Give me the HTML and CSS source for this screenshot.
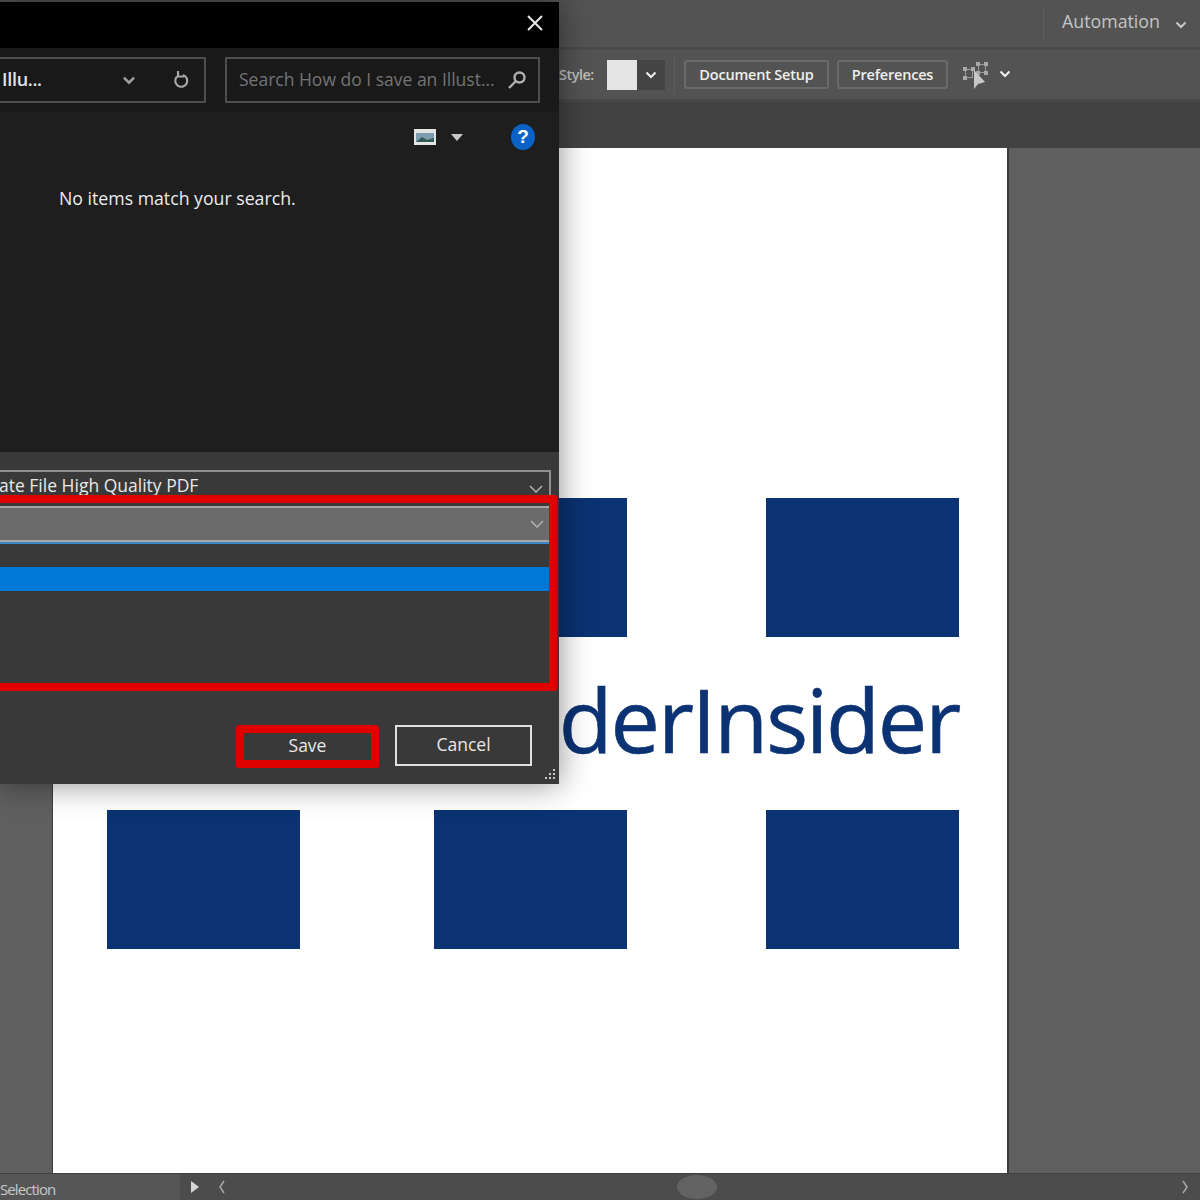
FILE: index.html
```html
<!DOCTYPE html>
<html>

<head>
    <meta charset="utf-8">
    <title>Save As</title>
    <link rel="stylesheet" href="styles.css">
</head>

<body>
    <div class="app">
        <div class="menubar">
            <div class="menubar__sep"></div>
            <span class="menubar__label">Automation</span>
            <svg class="chevron chevron--menu" viewBox="0 0 12 8"><path d="M1.500 1.500 6 6l4.500-4.500"/></svg>
        </div>

        <div class="controlbar">
            <span class="controlbar__label">Style:</span>
            <div class="swatch"></div>
            <div class="swatch__drop">
                <svg class="chevron chevron--white" viewBox="0 0 12 8"><path d="M1.500 1.500 6 6l4.500-4.500"/></svg>
            </div>
            <div class="controlbar__sep"></div>
            <div class="ctl-button ctl-button--setup">Document Setup</div>
            <div class="ctl-button ctl-button--prefs">Preferences</div>
            <svg class="arrange-icon" viewBox="0 0 26 28">
                <rect x="2.500" y="8.500" width="7" height="8"/>
                <rect x="15.500" y="3.500" width="7" height="8"/>
                <path class="arrange-icon__dot" d="M0 6h4v4H0zM0 15h4v4H0zM8 6h4v4H8zM13 1h4v4h-4zM21 1h4v4h-4zM13 10h4v4h-4zM21 10h4v4h-4z"/>
                <path class="arrange-icon__cursor" d="M11 9v19l4-5 7-2z"/>
            </svg>
            <svg class="chevron chevron--white chevron--arrange" viewBox="0 0 12 8"><path d="M1.500 1.500 6 6l4.500-4.500"/></svg>
        </div>

        <div class="tabbar"></div>

        <div class="workspace">
            <div class="artboard">
                <div class="art-row">
                    <div class="art-block"></div>
                    <div class="art-block"></div>
                    <div class="art-block"></div>
                </div>
                <div class="art-title">derInsider</div>
                <div class="art-row">
                    <div class="art-block"></div>
                    <div class="art-block"></div>
                    <div class="art-block"></div>
                </div>
            </div>
        </div>

        <div class="statusbar">
            <div class="statusbar__info"><span class="statusbar__text">Selection</span></div>
            <div class="statusbar__play"></div>
            <div class="scroller">
                <svg class="scroller__arrow" viewBox="0 0 8 14"><path d="M6 1 2 7l4 6"/></svg>
                <div class="scroller__thumb"></div>
                <svg class="scroller__arrow" viewBox="0 0 8 14"><path d="M2 1l4 6-4 6"/></svg>
            </div>
        </div>
    </div>

    <!-- Save As dialog, floats over the app window -->
    <div class="dialog">
        <div class="dialog__title">
            <svg class="dialog__close" viewBox="0 0 18 18"><path d="M2 2l14 14M16 2 2 16"/></svg>
        </div>

        <div class="dialog__nav">
            <div class="nav-box nav-box--address">
                <span class="nav-box__path">Illu...</span>
                <svg class="chevron chevron--address" viewBox="0 0 12 8"><path d="M1.500 1.500 6 6l4.500-4.500"/></svg>
                <svg class="refresh-icon" viewBox="0 0 18 20">
                    <path d="M5 6.500a6 6 0 1 0 6-1.500"/>
                    <path d="M6 1v5.500h6"/>
                </svg>
            </div>
            <div class="nav-box nav-box--search">
                <span class="nav-box__hint">Search How do I save an Illust...</span>
                <svg class="search-icon" viewBox="0 0 20 20">
                    <circle cx="12.500" cy="7.500" r="5"/>
                    <path d="M8.500 11.500 2 18"/>
                </svg>
            </div>
        </div>

        <div class="dialog__commands">
            <svg class="view-icon" viewBox="0 0 22 16">
                <rect width="22" height="16" fill="#e4e4e4"/>
                <rect x="2" y="4" width="18" height="9" fill="#7d9cb0"/>
                <path d="M2 13l6-5 5 3 7-2v4z" fill="#2f5a55"/>
            </svg>
            <div class="caret-down"></div>
            <div class="help-icon">?</div>
        </div>

        <div class="dialog__results">
            <p class="dialog__empty">No items match your search.</p>
        </div>

        <div class="dialog__form">
            <div class="field">
                <span class="field__text">ate File High Quality PDF</span>
                <svg class="chevron chevron--field" viewBox="0 0 14 8"><path d="M1 1l6 6 6-6"/></svg>
            </div>
            <div class="select-wrap">
                <div class="field field--open">
                    <svg class="chevron chevron--field" viewBox="0 0 14 8"><path d="M1 1l6 6 6-6"/></svg>
                </div>
                <div class="droplist">
                    <div class="droplist__item"></div>
                </div>
            </div>
            <div class="dialog__buttons">
                <div class="dialog-btn dialog-btn--save">Save</div>
                <div class="dialog-btn dialog-btn--cancel">Cancel</div>
            </div>
            <svg class="grip" viewBox="0 0 14 12">
                <rect x="11" y="0" width="2" height="2"/>
                <rect x="7" y="4" width="2" height="2"/>
                <rect x="11" y="4" width="2" height="2"/>
                <rect x="3" y="8" width="2" height="2"/>
                <rect x="7" y="8" width="2" height="2"/>
                <rect x="11" y="8" width="2" height="2"/>
            </svg>
        </div>
    </div>
</body>

</html>
```

FILE: styles.css
```css
* {
    box-sizing: border-box;
}

body {
    margin: 0;
    background: #535353;
    font-family: "Open Sans", "Noto Sans", sans-serif;
    overflow: hidden;
}

.app {
    display: flex;
    flex-direction: column;
    width: 1200px;
    height: 1200px;
}

.chevron {
    display: block;
    fill: none;
    stroke: #c8c8c8;
    stroke-width: 2;
}

.chevron--white {
    width: 12px;
    height: 8px;
    stroke: #f0f0f0;
}

/* app top bars */
.menubar {
    display: flex;
    align-items: center;
    height: 47px;
    background: #535353;
}

.menubar__sep {
    width: 1px;
    height: 32px;
    margin-left: 1043px;
    background: #5e5e5e;
}

.menubar__label {
    margin: 0 0 5px 18px;
    color: #c4c4c4;
    font-size: 17.800px;
}

.chevron--menu {
    width: 12px;
    height: 8px;
    margin-left: 15px;
    margin-top: 2px;
}

.controlbar {
    display: flex;
    align-items: center;
    height: 55px;
    padding-left: 559px;
    background: #535353;
    border-top: 3px solid #4a4a4a;
    border-bottom: 3px solid #484848;
}

.controlbar__label {
    width: 48px;
    color: #bdbdbd;
    font-size: 14.500px;
    font-weight: 600;
    letter-spacing: -.5px;
}

.swatch {
    width: 30px;
    height: 30px;
    background: #e4e4e4;
}

.swatch__drop {
    display: flex;
    align-items: center;
    justify-content: center;
    width: 28px;
    height: 30px;
    background: #444;
}

.controlbar__sep {
    width: 1px;
    height: 36px;
    margin: 0 9px;
    background: #5e5e5e;
}

.ctl-button {
    display: flex;
    align-items: center;
    justify-content: center;
    height: 29px;
    border: 2px solid #6a6a6a;
    border-radius: 3px;
    color: #efefef;
    font-size: 14.500px;
    font-weight: 600;
    letter-spacing: -.2px;
}

.ctl-button--setup {
    width: 145px;
}

.ctl-button--prefs {
    width: 111px;
    margin-left: 8px;
}

.arrange-icon {
    width: 26px;
    height: 28px;
    margin-left: 15px;
    fill: none;
    stroke: #9a9a9a;
    stroke-width: 1;
}

.arrange-icon__dot {
    fill: #a8a8a8;
    stroke: none;
}

.arrange-icon__cursor {
    fill: #c8c8c8;
    stroke: none;
}

.chevron--arrange {
    margin-left: 10px;
    margin-top: -2px;
}

.tabbar {
    height: 46px;
    background: #424242;
}

/* canvas */
.workspace {
    flex: 1;
    display: flex;
    padding-left: 52px;
    background: #5f5f5f;
}

.artboard {
    width: 957px;
    padding: 350px 48px 0 54px;
    background: #fff;
    border-left: 1px solid #3c3c3c;
    border-right: 2px solid #3c3c3c;
}

.art-row {
    display: grid;
    grid-template-columns: 327px 332px 193px;
}

.art-block {
    width: 193px;
    height: 139px;
    background: #0b3272;
}

.art-title {
    height: 173px;
    color: #0b3272;
    font-size: 88px;
    line-height: 164px;
    text-align: right;
    letter-spacing: -2.100px;
    -webkit-text-stroke: .6px #0b3272;
}

/* bottom status */
.statusbar {
    display: flex;
    align-items: center;
    height: 27px;
    background: #4c4c4c;
    border-top: 1px solid #3f3f3f;
}

.statusbar__info {
    width: 180px;
    height: 100%;
    overflow: hidden;
    background: #565656;
}

.statusbar__text {
    display: block;
    margin-top: 5px;
    color: #c8c8c8;
    font-size: 15px;
    letter-spacing: -.9px;
}

.statusbar__play {
    width: 0;
    height: 0;
    margin-left: 11px;
    border-left: 8px solid #d6d6d6;
    border-top: 6px solid transparent;
    border-bottom: 6px solid transparent;
}

.scroller {
    flex: 1;
    display: flex;
    align-items: center;
    justify-content: space-between;
    padding: 0 11px 0 19px;
}

.scroller__arrow {
    width: 8px;
    height: 14px;
    fill: none;
    stroke: #a8a8a8;
    stroke-width: 1.500;
}

.scroller__thumb {
    width: 40px;
    height: 24px;
    margin-left: -14px;
    border-radius: 50%;
    background: #636363;
}

/* Save As dialog */
.dialog {
    position: absolute;
    top: 2px;
    left: 0;
    display: flex;
    flex-direction: column;
    width: 559px;
    height: 782px;
    background: #1e1e1e;
    box-shadow: 0 0 30px rgba(0, 0, 0, .45);
}

.dialog__title {
    display: flex;
    align-items: center;
    justify-content: flex-end;
    flex: none;
    height: 46px;
    padding: 0 15px 4px 0;
    background: #000;
}

.dialog__close {
    width: 18px;
    height: 18px;
    fill: none;
    stroke: #e8e8e8;
    stroke-width: 2;
}

.dialog__nav {
    display: flex;
    gap: 19px;
    flex: none;
    height: 64px;
    padding: 9px 19px 8px 0;
    background: #191919;
}

.nav-box {
    display: flex;
    align-items: center;
    height: 46px;
    border: 2px solid #4e4e4e;
}

.nav-box--address {
    width: 206px;
    border-left: none;
}

.nav-box__path {
    width: 122px;
    margin-bottom: 2px;
    padding-left: 2px;
    color: #e4e4e4;
    font-size: 18px;
    font-weight: 600;
    letter-spacing: -.3px;
}

.chevron--address {
    width: 14px;
    height: 9px;
    stroke: #a0a0a0;
    stroke-width: 2.200;
}

.refresh-icon {
    width: 18px;
    height: 20px;
    margin-left: 36px;
    fill: none;
    stroke: #a8a8a8;
    stroke-width: 2.200;
}

.nav-box--search {
    flex: 1;
    padding-left: 12px;
}

.nav-box__hint {
    width: 268px;
    margin-bottom: 3px;
    color: #747474;
    font-size: 17.500px;
    white-space: nowrap;
}

.search-icon {
    width: 20px;
    height: 20px;
    fill: none;
    stroke: #b0b0b0;
    stroke-width: 2.400;
}

.dialog__commands {
    display: flex;
    align-items: center;
    flex: none;
    height: 50px;
    padding-left: 414px;
    background: #1e1e1e;
}

.view-icon {
    width: 22px;
    height: 16px;
}

.caret-down {
    width: 0;
    height: 0;
    margin-left: 15px;
    border-top: 7px solid #c8c8c8;
    border-left: 6px solid transparent;
    border-right: 6px solid transparent;
}

.help-icon {
    width: 24px;
    height: 26px;
    margin-left: 48px;
    border-radius: 50%;
    background: #0a63c4;
    color: #fff;
    font-family: "Liberation Sans", sans-serif;
    font-size: 19px;
    font-weight: 700;
    line-height: 26px;
    text-align: center;
}

.dialog__results {
    flex: 1;
    padding: 24px 0 0 59px;
}

.dialog__empty {
    margin: 0;
    color: #ececec;
    font-size: 17.700px;
    line-height: 24px;
}

.dialog__form {
    position: relative;
    flex: none;
    height: 332px;
    padding-top: 18px;
    background: #393939;
}

.field {
    display: flex;
    align-items: center;
    justify-content: flex-end;
    position: relative;
    width: 551px;
    height: 38px;
    padding-right: 6px;
    border: 2px solid #8f8f8f;
    border-left: none;
}

.field__text {
    position: absolute;
    left: -1px;
    top: 0;
    color: #e8e8e8;
    font-size: 17.500px;
    line-height: 26px;
}

.chevron--field {
    width: 14px;
    height: 8px;
    stroke: #b0b0b0;
    stroke-width: 1.500;
}

/* red callout around the open format list */
.select-wrap {
    position: absolute;
    top: 43px;
    left: 0;
    width: 557px;
    height: 196px;
    border: 8px solid #e00000;
    border-left: none;
    border-radius: 0 3px 3px 0;
}

.field--open {
    width: 100%;
    height: 36px;
    margin-top: 3px;
    padding-right: 5px;
    background: #6b6b6b;
    border-color: #a6a6a6;
    border-right: none;
}

.droplist {
    height: 137px;
    padding-top: 23px;
    border-top: 2px solid #3f86c8;
}

.droplist__item {
    height: 24px;
    background: #0078d7;
}

.dialog__buttons {
    position: absolute;
    top: 273px;
    left: 236px;
    display: flex;
    align-items: flex-start;
    gap: 16px;
}

.dialog-btn {
    display: flex;
    align-items: center;
    justify-content: center;
    padding-bottom: 3px;
    color: #e8e8e8;
    font-size: 17.500px;
}

.dialog-btn--save {
    width: 143px;
    height: 43px;
    border: 8px solid #e00000;
    border-radius: 3px;
}

.dialog-btn--cancel {
    width: 137px;
    height: 41px;
    border: 2px solid #e0e0e0;
}

.grip {
    position: absolute;
    right: 3px;
    bottom: 3px;
    width: 14px;
    height: 12px;
    fill: #c8c8c8;
}
```
